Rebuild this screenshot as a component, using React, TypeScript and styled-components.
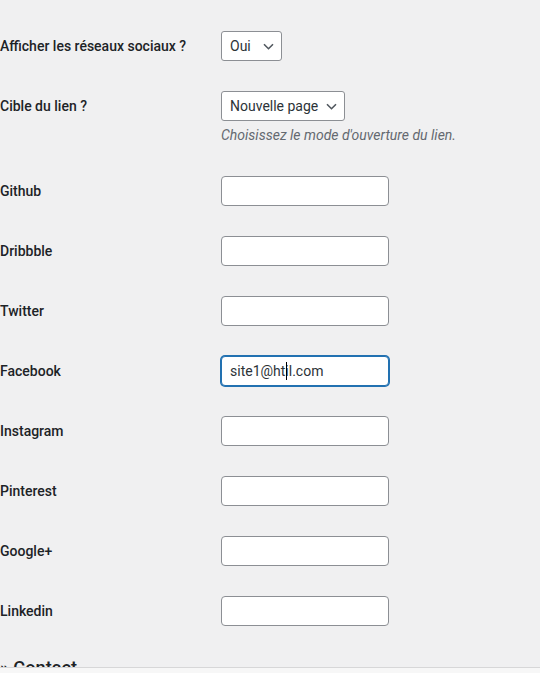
import React from "react";
import styled, { createGlobalStyle } from "styled-components";

const Global = createGlobalStyle`
  html, body { margin: 0; padding: 0; }
  body {
    background: #f0f0f1;
    font-family: Roboto, "Noto Sans", sans-serif;
    font-size: 14px;
    color: #1d2327;
    overflow: hidden;
  }
`;

const Viewport = styled.div`
  height: 667px;
  overflow: hidden;
`;

const Form = styled.div`
  padding-top: 16px;
  display: flex;
  flex-direction: column;
`;

const Row = styled.div`
  display: grid;
  grid-template-columns: 221px 1fr;
  padding: 15px 0;
`;

const Label = styled.label`
  font-weight: 500;
  font-size: 14px;
  line-height: 30px;
  color: #1d2327;
  white-space: nowrap;
`;

const Field = styled.div`
  display: flex;
  flex-direction: column;
  align-items: flex-start;
`;

const SelectWrap = styled.div`
  position: relative;
  display: inline-flex;
`;

const Select = styled.select<{ $w: number }>`
  appearance: none;
  -webkit-appearance: none;
  width: ${(p) => p.$w}px;
  height: 30px;
  box-sizing: border-box;
  margin: 0;
  padding: 0 24px 0 8px;
  border: 1px solid #8c8f94;
  border-radius: 3px;
  background: #fff;
  font-family: inherit;
  font-size: 14px;
  color: #2c3338;
  outline: none;
`;

const Chevron = styled.svg`
  position: absolute;
  right: 8px;
  top: 12px;
  width: 11px;
  height: 7px;
  pointer-events: none;
`;

const Description = styled.p`
  margin: 4px 0 0;
  font-style: italic;
  font-size: 14px;
  line-height: 21px;
  color: #646970;
`;

const InputWrap = styled.div`
  position: relative;
  display: inline-flex;
`;

const TextInput = styled.input<{ $focus?: boolean }>`
  width: 168px;
  height: 30px;
  box-sizing: border-box;
  margin: 0;
  padding: 0 8px;
  border: 1px solid ${(p) => (p.$focus ? "#2271b1" : "#8c8f94")};
  box-shadow: ${(p) => (p.$focus ? "0 0 0 1px #2271b1" : "none")};
  border-radius: 4px;
  background: #fff;
  font-family: inherit;
  font-size: 14px;
  color: #2c3338;
  outline: none;
`;

const Caret = styled.span`
  position: absolute;
  left: 65px;
  top: 6px;
  width: 1px;
  height: 18px;
  background: #000;
`;

const Heading = styled.h2`
  margin: 15px 0 0;
  font-size: 18.2px;
  font-weight: 500;
  line-height: 1.3;
  color: #1d2327;
`;

const BottomBar = styled.div`
  height: 6px;
  border-top: 1px solid #d7d7d8;
  background: #f7f7f7;
`;

const ChevronIcon = () => (
  <Chevron viewBox="0 0 11 7">
    <path d="M1 1.2l4.5 4.5 4.5-4.5" fill="none" stroke="#50575e" strokeWidth="1.6" />
  </Chevron>
);

const Dropdown: React.FC<{ w: number; options: string[] }> = ({ w, options }) => (
  <SelectWrap>
    <Select $w={w} defaultValue={options[0]}>
      {options.map((o) => (
        <option key={o}>{o}</option>
      ))}
    </Select>
    <ChevronIcon />
  </SelectWrap>
);

const networks = [
  { name: "Github", value: "" },
  { name: "Dribbble", value: "" },
  { name: "Twitter", value: "" },
  { name: "Facebook", value: "site1@htil.com", focus: true },
  { name: "Instagram", value: "" },
  { name: "Pinterest", value: "" },
  { name: "Google+", value: "" },
  { name: "Linkedin", value: "" },
];

export default function App() {
  return (
    <>
      <Global />
      <Viewport>
        <Form>
          <Row>
            <Label>Afficher les réseaux sociaux ?</Label>
            <Field>
              <Dropdown w={61} options={["Oui", "Non"]} />
            </Field>
          </Row>
          <Row>
            <Label>Cible du lien ?</Label>
            <Field>
              <Dropdown w={124} options={["Nouvelle page", "Même page"]} />
              <Description>Choisissez le mode d'ouverture du lien.</Description>
            </Field>
          </Row>
          {networks.map((n) => (
            <Row key={n.name}>
              <Label>{n.name}</Label>
              <Field>
                <InputWrap>
                  <TextInput type="text" readOnly value={n.value} $focus={n.focus} />
                  {n.focus && <Caret />}
                </InputWrap>
              </Field>
            </Row>
          ))}
          <Heading>» Contact</Heading>
        </Form>
      </Viewport>
      <BottomBar />
    </>
  );
}
